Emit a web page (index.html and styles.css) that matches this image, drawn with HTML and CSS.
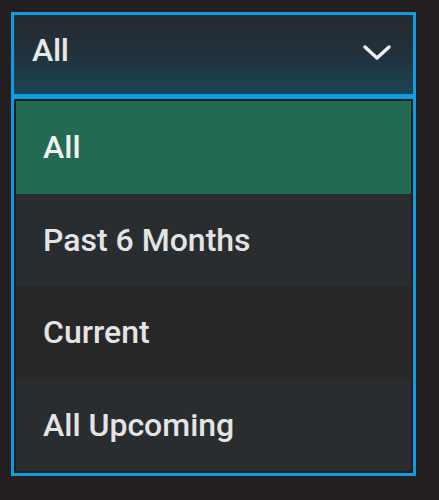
FILE: index.html
```html
<!DOCTYPE html>
<html>
<head>
<meta charset="utf-8">
<link rel="stylesheet" href="styles.css">
</head>
<body>
<div class="dropdown">
  <div class="select">
    <span class="select-label">All</span>
    <svg class="chevron" width="30" height="18" viewBox="0 0 30 18">
      <path d="M3 3 L15 14 L27 3" fill="none" stroke="#eeeeee" stroke-width="3.5" stroke-linecap="round" stroke-linejoin="round"/>
    </svg>
  </div>
  <ul class="list">
    <li class="item selected">All</li>
    <li class="item alt">Past 6 Months</li>
    <li class="item">Current</li>
    <li class="item alt">All Upcoming</li>
  </ul>
</div>
</body>
</html>
```
FILE: styles.css
```css
html, body {
  margin: 0;
  padding: 0;
}
body {
  background: #231f20;
  width: 439px;
  height: 500px;
  font-family: Roboto, "Liberation Sans", sans-serif;
  overflow: hidden;
}
.dropdown {
  margin: 12px 0 0 11px;
  width: 405px;
}
.select {
  box-sizing: border-box;
  height: 85px;
  border: 3px solid #0e9de2;
  background: linear-gradient(180deg, #252a2e 0%, #21323c 50%, #1c4456 100%);
  display: flex;
  align-items: center;
  justify-content: space-between;
  padding: 0 21px 10px 18px;
}
.select-label {
  color: #e8e8e8;
  font-size: 32px;
  font-weight: 500;
  letter-spacing: -0.3px;
}
.chevron {
  display: block;
  margin-top: 6px;
}
.list {
  list-style: none;
  margin: 0;
  padding: 2px;
  border: 3px solid #0e9de2;
  border-top-width: 2px;
  background: #1e1e1f;
}
.item {
  height: 92.5px;
  display: flex;
  align-items: center;
  padding-left: 27px;
  color: #e4e4e4;
  font-size: 32px;
  font-weight: 500;
  background: #272728;
}
.item.alt {
  background: #2a2d30;
}
.item.selected {
  background: #236a53;
  color: #eef2f0;
}
```
